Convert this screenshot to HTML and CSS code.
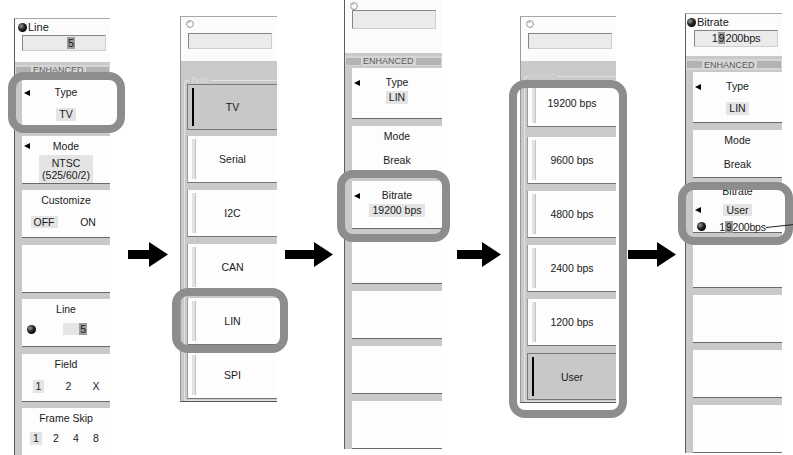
FILE: index.html
```html
<!DOCTYPE html>
<html>
<head>
<meta charset="utf-8">
<link rel="stylesheet" href="styles.css">
</head>
<body>
<div class="fig">

  <section class="panel p1">
    <div class="hdr h1">
      <div class="ttl"><i class="knob"></i>Line</div>
      <div class="field f1"><b class="cur">5</b></div>
    </div>
    <div class="enh"><i class="bar bl"></i><span>ENHANCED</span><i class="bar"></i></div>
    <div class="btn first">
      <div class="lbl"><i class="tri"></i><span>Type</span></div>
      <div class="val"><span class="box">TV</span></div>
    </div>
    <div class="btn mode">
      <div class="lbl"><i class="tri"></i><span>Mode</span></div>
      <div class="val"><span class="box two">NTSC<br>(525/60/2)</span></div>
    </div>
    <div class="btn">
      <div class="lbl"><span>Customize</span></div>
      <div class="val split"><span><span class="box">OFF</span></span><span>ON</span></div>
    </div>
    <div class="btn"></div>
    <div class="btn">
      <div class="lbl"><span>Line</span></div>
      <div class="val line"><i class="knob"></i><span class="mini"><b class="cur">5</b></span></div>
    </div>
    <div class="btn">
      <div class="lbl"><span>Field</span></div>
      <div class="val three"><span class="box">1</span><span>2</span><span>X</span></div>
    </div>
    <div class="btn">
      <div class="lbl"><span>Frame Skip</span></div>
      <div class="val four"><span class="box">1</span><span>2</span><span>4</span><span>8</span></div>
    </div>
  </section>

  <section class="panel p2">
    <div class="hdr hc">
      <svg class="circ" width="8" height="8" viewBox="0 0 8 8"><circle cx="4" cy="4" r="3.4" fill="#fff" stroke="#7a7a7a" stroke-width="0.8"/><path d="M2.2 3 A2 2 0 0 1 4.2 1.9" fill="none" stroke="#8a8a8a" stroke-width="0.7"/></svg>
      <div class="field fc"></div>
    </div>
    <fieldset class="grp g2"><legend>Type</legend>
      <div class="opt sel">TV</div>
      <div class="opt">Serial</div>
      <div class="opt">I2C</div>
      <div class="opt">CAN</div>
      <div class="opt">LIN</div>
      <div class="opt">SPI</div>
    </fieldset>
  </section>

  <section class="panel p3">
    <div class="hdr h3">
      <svg class="circ" width="8" height="8" viewBox="0 0 8 8"><circle cx="4" cy="4" r="3.4" fill="#fff" stroke="#7a7a7a" stroke-width="0.8"/><path d="M2.2 3 A2 2 0 0 1 4.2 1.9" fill="none" stroke="#8a8a8a" stroke-width="0.7"/></svg>
      <div class="field f3"></div>
    </div>
    <div class="enh"><i class="bar bl"></i><span>ENHANCED</span><i class="bar"></i></div>
    <div class="btn first t3">
      <div class="lbl"><i class="tri"></i><span>Type</span></div>
      <div class="val"><span class="box">LIN</span></div>
    </div>
    <div class="btn brk">
      <div class="lbl"><span>Mode</span></div>
      <div class="val"><span>Break</span></div>
    </div>
    <div class="btn t3">
      <div class="lbl"><i class="tri"></i><span>Bitrate</span></div>
      <div class="val"><span class="box">19200 bps</span></div>
    </div>
    <div class="btn"></div>
    <div class="btn"></div>
    <div class="btn"></div>
    <div class="btn"></div>
  </section>

  <section class="panel p4">
    <div class="hdr hc">
      <svg class="circ" width="8" height="8" viewBox="0 0 8 8"><circle cx="4" cy="4" r="3.4" fill="#fff" stroke="#7a7a7a" stroke-width="0.8"/><path d="M2.2 3 A2 2 0 0 1 4.2 1.9" fill="none" stroke="#8a8a8a" stroke-width="0.7"/></svg>
      <div class="field fc"></div>
    </div>
    <fieldset class="grp g4"><legend>Bitrate</legend>
      <div class="opt o1">19200 bps</div>
      <div class="opt">9600 bps</div>
      <div class="opt">4800 bps</div>
      <div class="opt">2400 bps</div>
      <div class="opt">1200 bps</div>
      <div class="opt sel">User</div>
    </fieldset>
  </section>

  <section class="panel p5">
    <div class="hdr h5">
      <div class="ttl"><i class="knob"></i>Bitrate</div>
      <div class="field f5">1<b class="cur">9</b>200bps</div>
    </div>
    <div class="enh"><i class="bar bl"></i><span>ENHANCED</span><i class="bar"></i></div>
    <div class="btn first">
      <div class="lbl"><i class="tri"></i><span>Type</span></div>
      <div class="val"><span class="box">LIN</span></div>
    </div>
    <div class="btn brk">
      <div class="lbl"><span>Mode</span></div>
      <div class="val"><span>Break</span></div>
    </div>
    <div class="btn br5">
      <div class="row r-top"><span>Bitrate</span></div>
      <div class="row"><i class="tri"></i><span><span class="box">User</span></span></div>
      <div class="row"><i class="knob"></i><span class="num">1<b class="cur">9</b>200bps</span></div>
    </div>
    <div class="btn"></div>
    <div class="btn"></div>
    <div class="btn"></div>
    <div class="btn"></div>
  </section>

  <svg class="arr a1" width="40" height="25" viewBox="0 0 40 25"><polygon points="0,8 21,8 21,0 40,12.5 21,25 21,17 0,17"/></svg>
  <svg class="arr a2" width="48" height="25" viewBox="0 0 48 25"><polygon points="0,8 29,8 29,0 48,12.5 29,25 29,17 0,17"/></svg>
  <svg class="arr a3" width="44" height="25" viewBox="0 0 44 25"><polygon points="0,8 25,8 25,0 44,12.5 25,25 25,17 0,17"/></svg>
  <svg class="arr a4" width="48" height="25" viewBox="0 0 48 25"><polygon points="0,8 29,8 29,0 48,12.5 29,25 29,17 0,17"/></svg>

  <div class="ring r1"></div>
  <div class="ring r2"></div>
  <div class="ring r3"></div>
  <div class="ring r4"></div>
  <div class="ring r5"></div>

  <svg class="leader" width="28" height="8" viewBox="0 0 28 8"><line x1="0" y1="5.5" x2="28" y2="2.5" stroke="#222" stroke-width="1"/></svg>
</div>
</body>
</html>
```

FILE: styles.css
```css
* { box-sizing: border-box; margin: 0; padding: 0; }
body {
  margin: 0;
  background: #fff;
  font-family: "Liberation Sans", Arial, sans-serif;
  font-size: 10.5px;
  color: #1a1a1a;
}
.fig { position: relative; width: 793px; height: 455px; overflow: hidden; background: #fff; }

/* panels */
.panel {
  position: absolute;
  background: #c9c9c9;
  border-left: 1px solid #5e5e5e;
  border-top: 1px solid #a9a9a9;
  display: flex;
  flex-direction: column;
  overflow: hidden;
}
.p1 { left: 14px; top: 18px; width: 96px; height: 445px; }
.p2 { left: 180px; top: 16px; width: 97px; border-left-color: #9a9a9a; border-bottom: 1px solid #555; }
.p3 { left: 344px; top: 0; width: 98px; border-top: none; }
.p4 { left: 520px; top: 16px; width: 96px; border-left-color: #9a9a9a; border-bottom: 1px solid #555; }
.p5 { left: 685px; top: 13px; width: 97px; }

/* headers */
.hdr { background: #fcfcfc; display: flex; flex-direction: column; flex-shrink: 0; }
.h1 { height: 43px; padding: 3px 0 0 3px; }
.h5 { height: 42px; padding: 3px 0 0 1px; }
.hc { height: 44px; padding: 3px 0 0 5px; }
.h3 { height: 53px; padding: 2px 0 0 5px; }
.ttl { display: flex; align-items: center; height: 11px; line-height: 11px; font-size: 11px; }
.ttl .knob { margin-right: 1px; }

.knob {
  display: inline-block;
  width: 9px; height: 9px;
  border-radius: 50%;
  background: radial-gradient(circle at 35% 35%, #9a9a9a 0, #2a2a2a 40%, #000 75%);
  flex-shrink: 0;
}
.circ { display: block; }

.field {
  background: #ebebeb;
  border-top: 1px solid #858585;
  border-left: 1px solid #858585;
  border-right: 1px solid #cfcfcf;
  border-bottom: 1px solid #cfcfcf;
  font-size: 11px;
}
.f1 { margin: 2px 0 0 4px; width: 84px; height: 16px; padding-left: 44px; line-height: 14px; }
.fc { margin: 5px 0 0 2px; width: 84px; height: 16px; }
.f3 { margin: 0 0 0 2px; width: 84px; height: 19px; }
.f5 { margin: 2px 0 0 7px; width: 84px; height: 17px; text-align: center; line-height: 15px; letter-spacing: -0.2px; }
.cur { font-weight: normal; background: #9c9c9c; padding: 0 1px; }

/* ENHANCED band */
.enh {
  margin-top: 3px;
  height: 10px;
  background: #d5d5d5;
  display: flex;
  align-items: center;
  gap: 2px;
  padding: 0 1px;
  flex-shrink: 0;
}
.enh span { font-size: 9px; line-height: 10px; color: #5c5c5c; }
.enh .bar { flex: 1; height: 7px; background: #b3b3b3; }
.enh .bl { flex: 0 0 15px; }
.p5 .enh { height: 11px; }

/* soft-key buttons */
.btn {
  margin-left: 7px;
  height: 48px;
  background: #fdfdfd;
  border-bottom: 1px solid #6a6a6a;
  margin-bottom: 6.5px;
  padding-top: 4px;
  flex-shrink: 0;
}
.p3 .btn, .p5 .btn { margin-bottom: 7px; }
.btn.first { height: 51px; padding-top: 8px; margin-top: 3px; }
.p3 .btn.first, .p5 .btn.first { margin-top: 2px; }
.btn:last-child { margin-bottom: 0; }

.lbl {
  display: grid;
  grid-template-columns: 14px 1fr 14px;
  align-items: center;
  height: 13px;
  line-height: 13px;
}
.lbl span { grid-column: 2; text-align: center; white-space: nowrap; }
.tri {
  grid-column: 1;
  justify-self: start;
  margin-left: 2px;
  width: 0; height: 0;
  border-right: 6px solid #000;
  border-top: 3.5px solid transparent;
  border-bottom: 3.5px solid transparent;
}
.val { margin-top: 9px; display: flex; justify-content: center; line-height: 13px; white-space: nowrap; }
.box { background: #e4e4e4; padding: 0 3px; }
.box.two { line-height: 12px; padding: 2px 3px; text-align: center; }
.mode .val { margin-top: 2px; }
.t3 { padding-top: 8px; }
.t3 .val { margin-top: 2px; }
.brk .val { margin-top: 11px; }

.split span { flex: 1; text-align: center; }
.split span .box { flex: none; }
.line { justify-content: flex-start; align-items: center; margin-top: 7px; }
.line .knob { margin-left: 5px; }
.mini { margin-left: 27px; width: 24px; height: 12px; line-height: 12px; background: #e6e6e6; text-align: right; }
.three { justify-content: space-around; }
.four { justify-content: flex-start; padding-left: 10px; gap: 12px; margin-top: 7px; }
.four span { width: 8px; text-align: center; }
.four .box { width: 12px; margin: 0 -2px; padding: 0; }

/* Bitrate button of last panel */
.br5 { padding-top: 0; }
.row {
  display: grid;
  grid-template-columns: 14px 1fr 14px;
  align-items: center;
  height: 17px;
  line-height: 16px;
}
.row.r-top { height: 16px; line-height: 13px; align-items: start; }
.row span { grid-column: 2; text-align: center; white-space: nowrap; }
.row .knob { grid-column: 1; margin-left: 4px; }
.row .num { padding-left: 10px; letter-spacing: -0.2px; }

/* selection lists */
.grp {
  margin: 15px 0 0 3px;
  border: 1px solid #e2e2e2;
  border-right: none;
  border-radius: 3px 0 0 3px;
  padding: 0 0 1px 0;
  min-width: 0;
}
.g4 { margin-top: 11px; }
.grp legend {
  font-size: 9px;
  line-height: 8px;
  color: #dcdcdc;
  margin-left: 4px;
  padding: 0 1px;
}
.g4 legend { color: #d3d3d3; }
.opt {
  position: relative;
  height: 47px;
  margin: 0 0 7px 2px;
  background: #fdfdfd;
  border-left: 1px solid #9c9c9c;
  border-bottom: 1px solid #767676;
  display: flex;
  align-items: center;
  justify-content: center;
  white-space: nowrap;
}
.opt::before {
  content: "";
  position: absolute;
  left: 3px; top: 3px; bottom: 3px;
  width: 3px;
  border-left: 1px solid #fff;
  border-right: 1px solid #c2c2c2;
  background: #e2e2e2;
}
.opt.sel { background: #c8c8c8; border-top: 1px solid #7a7a7a; border-left-color: #7a7a7a; }
.opt.sel::before { background: #000; border: none; width: 2px; left: 4px; }
.g2 .sel { height: 46px; margin-bottom: 6px; }
.g4 .o1 { margin-bottom: 10px; }
.opt:last-child { margin-bottom: 0; }

/* arrows */
.arr { position: absolute; top: 242px; fill: #000; }
.a1 { left: 128px; }
.a2 { left: 285px; }
.a3 { left: 457px; }
.a4 { left: 628px; }

/* highlight rings */
.ring { position: absolute; border: 8px solid #8d8d8d; border-radius: 16px; }
.r1 { left: 8px; top: 72px; width: 117px; height: 61px; }
.r2 { left: 172px; top: 288px; width: 116px; height: 65px; }
.r3 { left: 337px; top: 170px; width: 113px; height: 72px; }
.r4 { left: 509px; top: 80px; width: 118px; height: 338px; }
.r5 { left: 678px; top: 182px; width: 115px; height: 63px; }

.leader { position: absolute; left: 766px; top: 222px; }
```
